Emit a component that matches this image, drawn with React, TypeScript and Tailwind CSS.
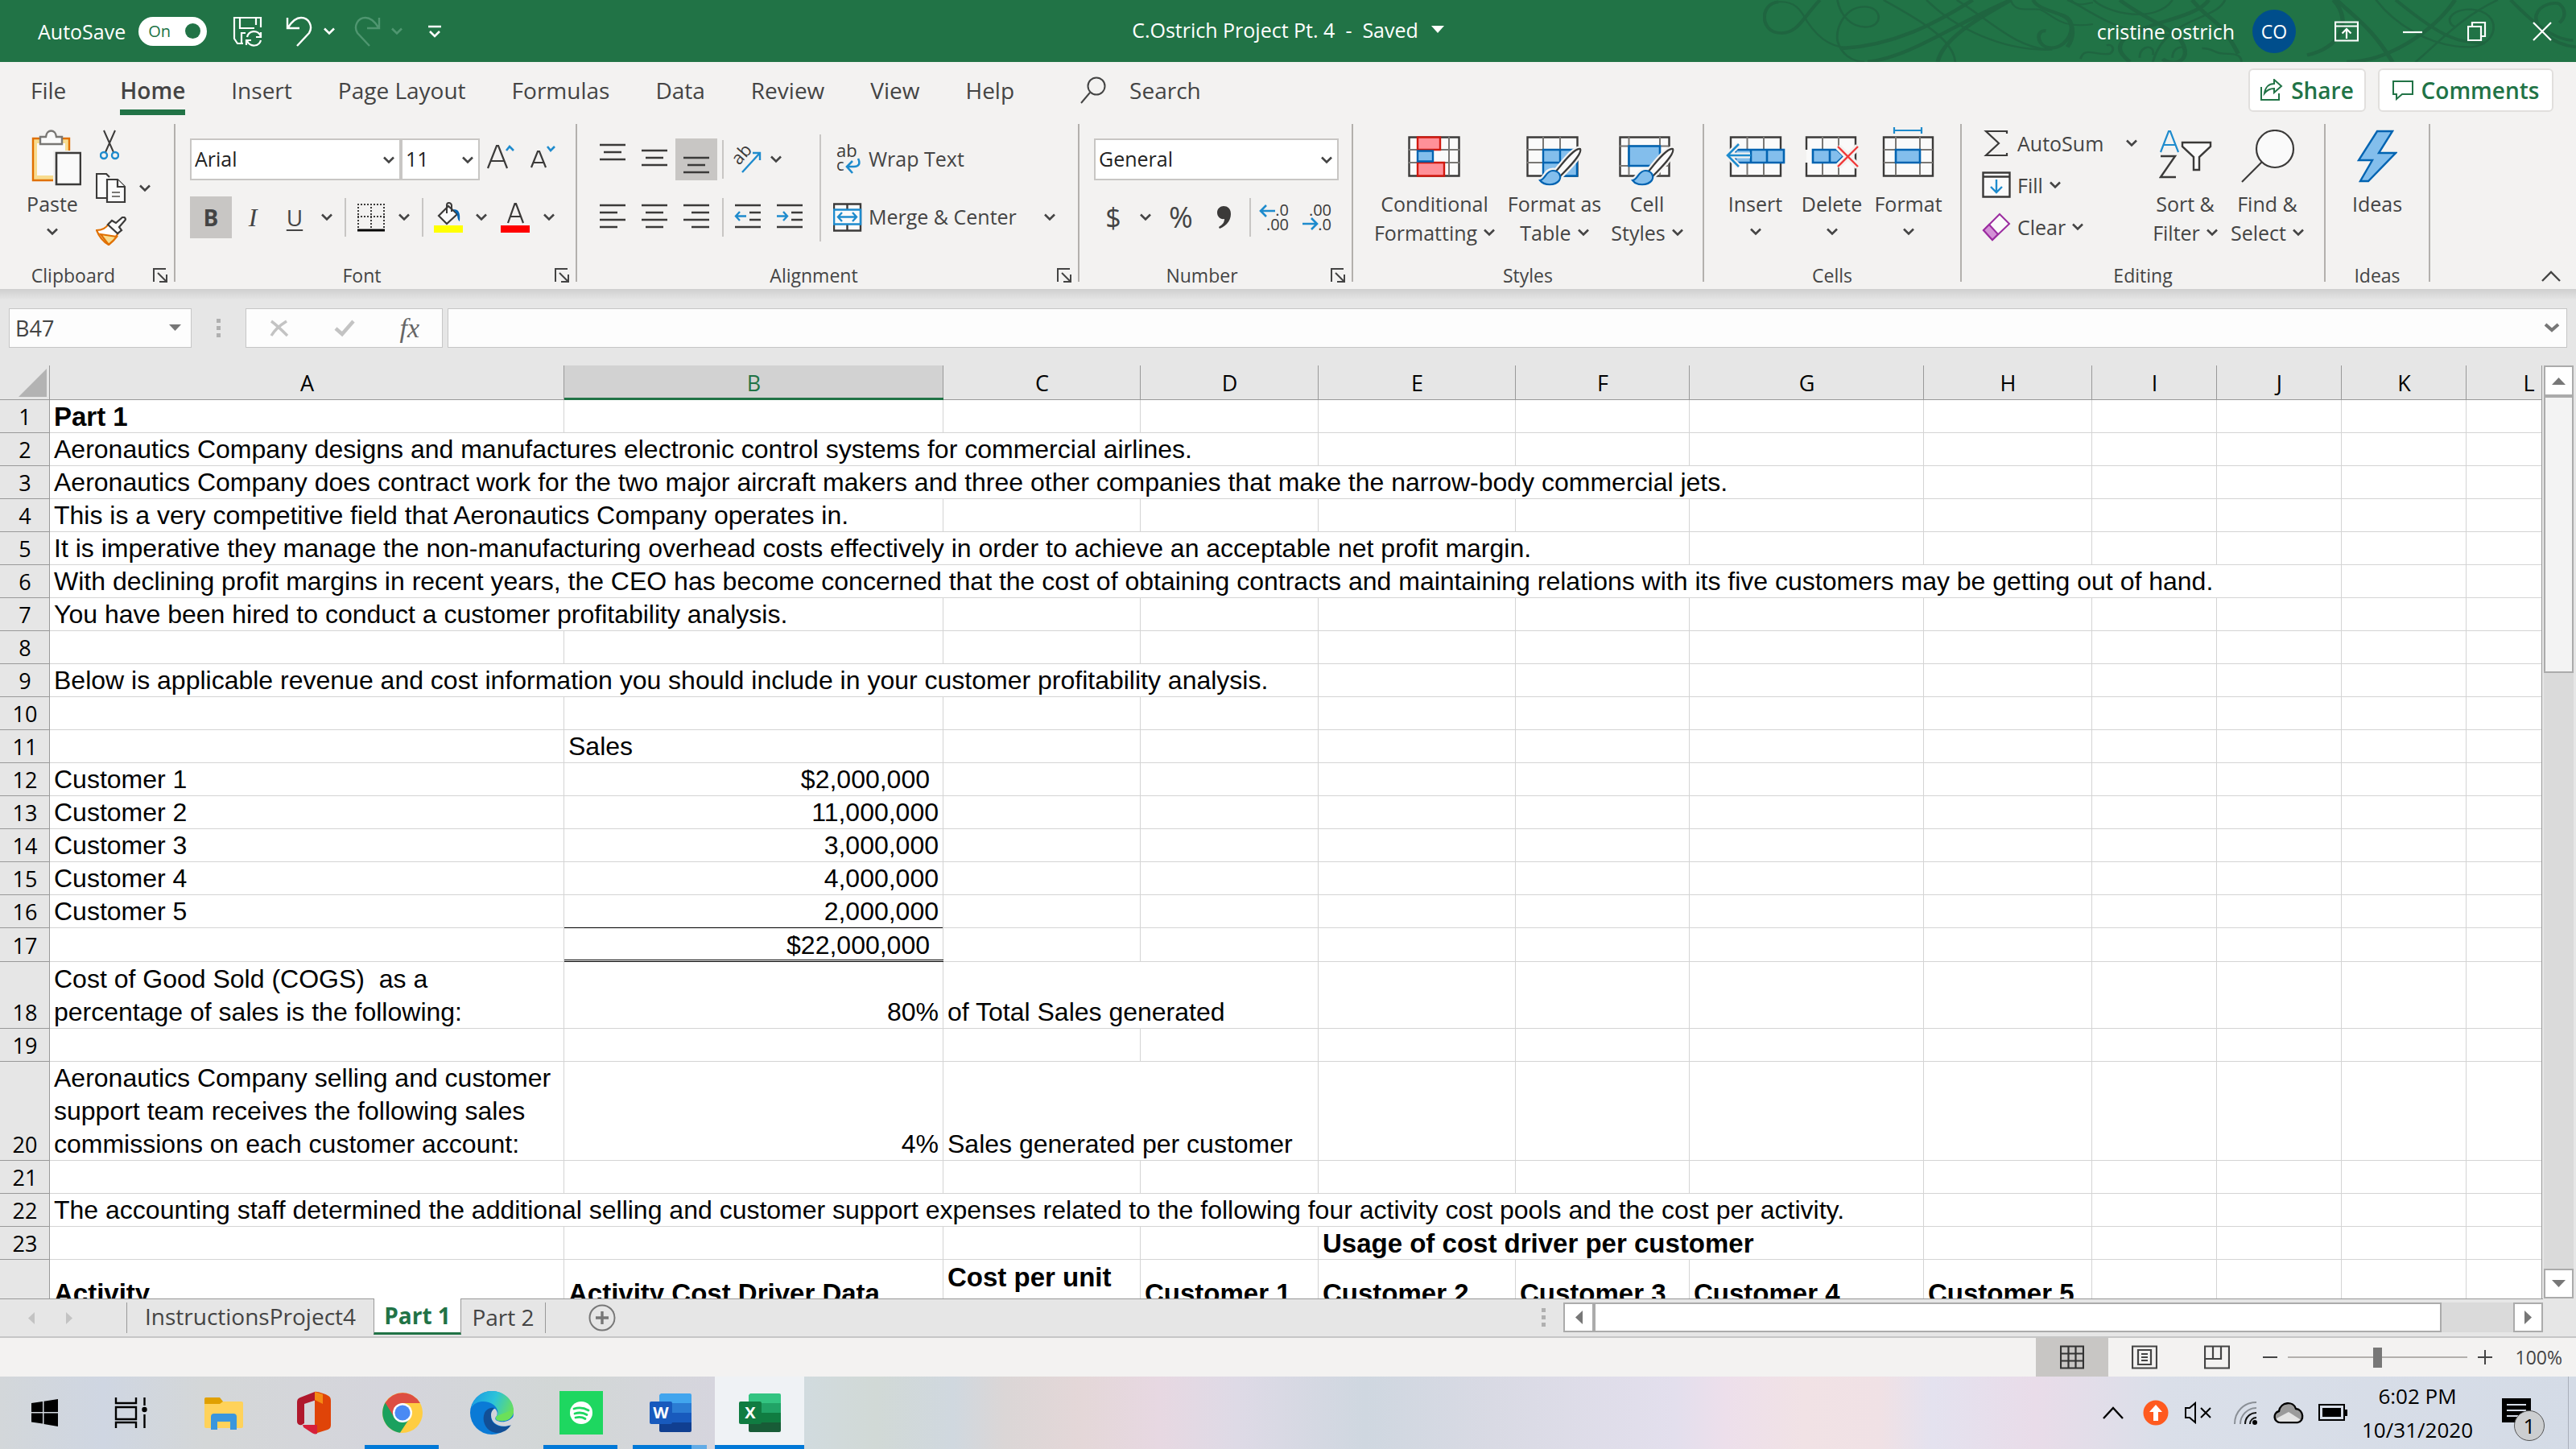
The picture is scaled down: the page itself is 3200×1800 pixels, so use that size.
import React, { useState } from 'react';

interface Cell {
  text: string;
  span?: number;
  align?: 'right' | 'accounting' | 'middle';
  bold?: boolean;
  line?: 'single' | 'double';
}

interface Row {
  height: string;
  cells: Record<string, Cell>;
}

const COLUMNS = ['A', 'B', 'C', 'D', 'E', 'F', 'G', 'H', 'I', 'J', 'K', 'L'];

const COLUMN_WIDTHS = [
  'w-[639px]', 'w-[471px]', 'w-[245px]', 'w-[221px]', 'w-[245px]', 'w-[216px]',
  'w-[291px]', 'w-[209px]', 'w-[155px]', 'w-[155px]', 'w-[155px]', 'w-[155px]',
];

const H1 = 'h-[41px]';

const ROWS: Row[] = [
  { height: H1, cells: { A: { text: 'Part 1', bold: true } } },
  { height: H1, cells: { A: { text: 'Aeronautics Company designs and manufactures electronic control systems for commercial airlines.', span: 4 } } },
  { height: H1, cells: { A: { text: 'Aeronautics Company does contract work for the two major aircraft makers and three other companies that make the narrow-body commercial jets.', span: 7 } } },
  { height: H1, cells: { A: { text: 'This is a very competitive field that Aeronautics Company operates in.', span: 2 } } },
  { height: H1, cells: { A: { text: 'It is imperative they manage the non-manufacturing overhead costs effectively in order to achieve an acceptable net profit margin.', span: 6 } } },
  { height: H1, cells: { A: { text: 'With declining profit margins in recent years, the CEO has become concerned that the cost of obtaining contracts and maintaining relations with its five customers may be getting out of hand.', span: 10 } } },
  { height: H1, cells: { A: { text: 'You have been hired to conduct a customer profitability analysis.', span: 2 } } },
  { height: H1, cells: {} },
  { height: H1, cells: { A: { text: 'Below is applicable revenue and cost information you should include in your customer profitability analysis.', span: 4 } } },
  { height: H1, cells: {} },
  { height: H1, cells: { B: { text: 'Sales' } } },
  { height: H1, cells: { A: { text: 'Customer 1' }, B: { text: '$2,000,000', align: 'accounting' } } },
  { height: H1, cells: { A: { text: 'Customer 2' }, B: { text: '11,000,000', align: 'right' } } },
  { height: H1, cells: { A: { text: 'Customer 3' }, B: { text: '3,000,000', align: 'right' } } },
  { height: H1, cells: { A: { text: 'Customer 4' }, B: { text: '4,000,000', align: 'right' } } },
  { height: H1, cells: { A: { text: 'Customer 5' }, B: { text: '2,000,000', align: 'right', line: 'single' } } },
  { height: 'h-[42px]', cells: { B: { text: '$22,000,000', align: 'accounting', line: 'double' } } },
  {
    height: 'h-[83px]',
    cells: {
      A: { text: 'Cost of Good Sold (COGS)  as a\npercentage of sales is the following:' },
      B: { text: '80%', align: 'right' },
      C: { text: 'of Total Sales generated', span: 2 },
    },
  },
  { height: H1, cells: {} },
  {
    height: 'h-[123px]',
    cells: {
      A: { text: 'Aeronautics Company selling and customer\nsupport team receives the following sales\ncommissions on each customer account:' },
      B: { text: '4%', align: 'right' },
      C: { text: 'Sales generated per customer', span: 2 },
    },
  },
  { height: H1, cells: {} },
  { height: H1, cells: { A: { text: 'The accounting staff determined the additional selling and customer support expenses related to the following four activity cost pools and the cost per activity.', span: 7 } } },
  { height: H1, cells: { E: { text: 'Usage of cost driver per customer', span: 3, bold: true } } },
  {
    height: 'h-[83px]',
    cells: {
      A: { text: 'Activity', bold: true, align: 'middle' },
      B: { text: 'Activity Cost Driver Data', bold: true, align: 'middle' },
      C: { text: 'Cost per unit\nof activity', bold: true, align: 'middle' },
      D: { text: 'Customer 1', bold: true, align: 'middle' },
      E: { text: 'Customer 2', bold: true, align: 'middle' },
      F: { text: 'Customer 3', bold: true, align: 'middle' },
      G: { text: 'Customer 4', bold: true, align: 'middle' },
      H: { text: 'Customer 5', bold: true, align: 'middle' },
    },
  },
];

const TABS = ['File', 'Home', 'Insert', 'Page Layout', 'Formulas', 'Data', 'Review', 'View', 'Help'];

/* ---------- small shared pieces ---------- */

const Chevron: React.FC<{ className?: string }> = ({ className = '' }) => (
  <svg className={`w-[14px] h-[10px] shrink-0 ${className}`} viewBox="0 0 14 10" fill="none" stroke="currentColor" strokeWidth="2.6">
    <path d="M1 1.5 7 7.5 13 1.5" />
  </svg>
);

const Sep: React.FC<{ className?: string }> = ({ className = '' }) => (
  <div className={`w-[2px] shrink-0 bg-[#c8c6c4] ${className}`} />
);

const Launcher: React.FC<{ label: string }> = ({ label }) => (
  <button aria-label={label} className="w-[34px] flex justify-center">
    <svg className="w-[18px] h-[18px]" viewBox="0 0 18 18" fill="none" stroke="#444" strokeWidth="2">
      <path d="M1 17V1h15M6 6l10 10M17 8v9H8" />
    </svg>
  </button>
);

interface GroupProps {
  label: string;
  width: string;
  launcher?: boolean;
  children: React.ReactNode;
}

const Group: React.FC<GroupProps> = ({ label, width, launcher, children }) => (
  <section className={`${width} shrink-0 h-[202px] flex`}>
    <div className="flex-1 min-w-0 flex flex-col">
      <div className="flex-1 flex min-h-0">{children}</div>
      <div className="h-[28px] flex items-center text-[23px] leading-[28px]">
        <span className="flex-1 text-center">{label}</span>
        {launcher && <Launcher label={`${label} settings`} />}
      </div>
    </div>
    <div className="w-[2px] h-[196px] bg-[#b3b0ad]" />
  </section>
);

interface BigButtonProps {
  lines: string[];
  width: string;
  arrow?: 'inline' | 'below';
  tall?: boolean;
  children: React.ReactNode;
}

const BigButton: React.FC<BigButtonProps> = ({ lines, width, arrow, tall, children }) => (
  <button className={`${width} flex flex-col items-center text-[25px] leading-[36px] whitespace-nowrap ${tall ? 'pt-[7px]' : 'pt-[15px]'}`}>
    <span className={`flex items-start ${tall ? 'h-[74px]' : 'h-[66px]'}`}>{children}</span>
    {lines.map((line, i) => (
      <span key={line} className="flex items-center gap-2">
        {line}
        {arrow === 'inline' && i === lines.length - 1 && <Chevron />}
      </span>
    ))}
    {arrow === 'below' && <Chevron className="mt-3" />}
  </button>
);

const IconButton: React.FC<{ label: string; active?: boolean; width?: string; children: React.ReactNode }> = ({ label, active, width = 'w-[52px]', children }) => (
  <button aria-label={label} className={`${width} h-[52px] shrink-0 flex items-center justify-center ${active ? 'bg-[#c8c6c4]' : ''}`}>
    {children}
  </button>
);

const ArrowButton: React.FC<{ label: string; width?: string }> = ({ label, width = 'w-[32px]' }) => (
  <button aria-label={label} className={`${width} h-[52px] shrink-0 flex items-center justify-center`}><Chevron /></button>
);

const Combo: React.FC<{ label: string; value: string; width: string }> = ({ label, value, width }) => (
  <div className={`${width} relative h-[52px] shrink-0`}>
    <select aria-label={label} className="w-full h-full appearance-none bg-white border-2 border-[#c8c6c4] pl-1 text-[25px] text-[#222]">
      <option>{value}</option>
    </select>
    <Chevron className="absolute right-[8px] top-[22px] pointer-events-none" />
  </div>
);

/* ---------- ribbon drawings ---------- */

const Lines: React.FC<{ d: string }> = ({ d }) => (
  <svg className="w-[36px] h-[52px]" viewBox="0 0 36 52" fill="none" stroke="#3b3a39" strokeWidth="2.4"><path d={d} /></svg>
);

const PasteIcon = () => (
  <svg className="ml-[10px] w-[62px] h-[70px]" viewBox="0 0 62 70" fill="none">
    <path d="M2 11h45v52H2z" fill="#f8dc8f" stroke="#e07000" strokeWidth="2.4" />
    <path d="M7 17h35v40H7z" fill="#fafafa" />
    <path d="M11 18V9h7c1-10 12-10 13 0h7v9z" fill="#fafafa" stroke="#797774" strokeWidth="2.4" />
    <path d="M27 26h35v44H27z" fill="#f3f2f1" />
    <path d="M31 29h30v39H31z" fill="#fafafa" stroke="#3b3a39" strokeWidth="2.6" />
  </svg>
);

const CutIcon = () => (
  <svg className="w-[24px] h-[38px]" viewBox="0 0 24 38" fill="none">
    <path d="M5 1l12 27M19 1 7 28" stroke="#3b3a39" strokeWidth="2" />
    <circle cx="5" cy="32" r="4" stroke="#1e8bcd" strokeWidth="2.4" />
    <circle cx="19" cy="32" r="4" stroke="#1e8bcd" strokeWidth="2.4" />
  </svg>
);

const CopyIcon = () => (
  <svg className="w-[38px] h-[38px]" viewBox="0 0 38 38" fill="#fafafa" stroke="#3b3a39" strokeWidth="2.2">
    <path d="M15 31H1V1h12l4 4" />
    <path d="M14 8h13l9 9v19H14z" />
    <path d="M27 8v9h9" />
    <path d="M20 24h10M20 29h10" stroke="#797774" />
  </svg>
);

const BrushIcon = () => (
  <svg className="w-[38px] h-[36px]" viewBox="0 0 38 36" strokeWidth="2.2">
    <path d="M1 17c7 0 12-3 15-8l12 11c-3 6-7 10-12 15C9 31 4 25 1 17z" fill="#fff" stroke="#e07000" />
    <path d="M6 22l20 3c-3 4-6 7-10 10z" fill="#f8dc8f" stroke="#e07000" />
    <path d="M15 10l5-5 5 3 8-7c3-1 5 2 3 4l-7 8 3 4-5 4z" fill="#fafafa" stroke="#3b3a39" />
  </svg>
);

const GrowFont: React.FC<{ small?: boolean }> = ({ small }) => (
  <svg className="w-[36px] h-[36px]" viewBox="0 0 36 36" fill="none">
    {small
      ? <path d="M4 28 12 8h2l8 20M7 22h12" stroke="#3b3a39" strokeWidth="2.2" />
      : <path d="M2 29 13 1h2l11 28M6 20h16" stroke="#3b3a39" strokeWidth="2.2" />}
    {small
      ? <path d="M24 2l4 5 5-5" stroke="#1e8bcd" strokeWidth="2.6" />
      : <path d="M25 7l4-5 5 5" stroke="#1e8bcd" strokeWidth="2.6" />}
  </svg>
);

const BordersIcon = () => (
  <svg className="w-[36px] h-[36px]" viewBox="0 0 36 36" fill="none" stroke="#3b3a39">
    <path d="M2 1v30M18 1v30M34 1v30M1 2h34M1 17h34" strokeWidth="2" strokeDasharray="2 2" />
    <path d="M1 34h34" stroke="#000" strokeWidth="3" />
  </svg>
);

const FillColorIcon = () => (
  <svg className="w-[36px] h-[38px]" viewBox="0 0 36 38" fill="none">
    <path d="M6 17 18 5l11 10-13 12z" fill="#fafafa" stroke="#3b3a39" strokeWidth="2.2" />
    <path d="M16 14V4c0-4 5-4 6 0v8" stroke="#3b3a39" strokeWidth="2" />
    <path d="M24 9c7 0 9 4 8 15-2-1-3-5-3-9z" fill="#0063b1" />
    <path d="M0 29h36v9H0z" fill="#ff0" />
  </svg>
);

const FontColorIcon = () => (
  <svg className="w-[36px] h-[38px]" viewBox="0 0 36 38" fill="none">
    <path d="M9 26 17.500 2h1.500l9 24M12 18h13" stroke="#3b3a39" strokeWidth="2.2" />
    <path d="M0 29h36v9H0z" fill="red" />
  </svg>
);

const OrientIcon = () => (
  <svg className="w-[38px] h-[38px]" viewBox="0 0 38 38" fill="none">
    <text x="0" y="0" transform="translate(9 27) rotate(-48)" fontSize="22" fill="#3b3a39" className="font-['Open_Sans',sans-serif]">ab</text>
    <path d="M13 35 35 11M26 11h9v9" stroke="#1e8bcd" strokeWidth="2.4" />
  </svg>
);

const WrapIcon = () => (
  <svg className="w-[36px] h-[38px]" viewBox="0 0 36 38" fill="none">
    <text x="4" y="16" fontSize="22" fill="#3b3a39" className="font-['Open_Sans',sans-serif]">ab</text>
    <text x="4" y="33" fontSize="20" fill="#3b3a39" className="font-['Open_Sans',sans-serif]">c</text>
    <path d="M31 18c3 6 1 10-5 10h-8M24 21l-7 7 7 8" stroke="#1e8bcd" strokeWidth="2.6" />
  </svg>
);

const MergeIcon = () => (
  <svg className="w-[36px] h-[36px]" viewBox="0 0 36 36" fill="#fafafa">
    <path d="M1 1.500h33v33H1zM17.500 1v33" stroke="#3b3a39" strokeWidth="2.4" />
    <path d="M1 8.500h33v18H1z" stroke="#1e8bcd" strokeWidth="2.6" />
    <path d="M6 17.500h23M11 12l-5 5.500 5 5.500M24 12l5 5.500-5 5.500" fill="none" stroke="#1e8bcd" strokeWidth="2.4" />
  </svg>
);

const DecimalIcon: React.FC<{ more?: boolean }> = ({ more }) => (
  <svg className="w-[38px] h-[38px]" viewBox="0 0 38 38" fill="none">
    <text x="37" y="17" textAnchor="end" fontSize="20" fill="#3b3a39" className="font-['Open_Sans',sans-serif]">{more ? '.0' : '.00'}</text>
    <text x="37" y="35" textAnchor="end" fontSize="20" fill="#3b3a39" className="font-['Open_Sans',sans-serif]">{more ? '.00' : '.0'}</text>
    {more
      ? <path d="M2 11h18M9 4l-7 7 7 7" stroke="#1e8bcd" strokeWidth="2.6" />
      : <path d="M1 27h18M12 20l7 7-7 7" stroke="#1e8bcd" strokeWidth="2.6" />}
  </svg>
);

const CondIcon = () => (
  <svg className="w-[66px] h-[52px]" viewBox="0 0 66 52" fill="#fafafa">
    <path d="M1.500 1.500h62v48h-62z" stroke="#3b3a39" strokeWidth="2.4" />
    <path d="M1 17h63M1 33h63M51 1v48M12 1v48" stroke="#797774" strokeWidth="2" />
    <path d="M12 1.500h28V17H12zM12 33h33v16.500H12z" fill="#ff9098" stroke="#d1190f" strokeWidth="2.4" />
    <path d="M12 18.500h19v13H12z" fill="#83beec" stroke="#0063b1" strokeWidth="2.4" />
  </svg>
);

const PaintBrush = () => (
  <>
    <path d="M67 16C60 14 45 34 36 45l6 5C52 40 70 22 67 16zM17 55c7-1 7-12 16-12 8 0 11 7 8 12-5 7-19 7-24 0z" fill="#f3f2f1" stroke="#f3f2f1" strokeWidth="7" />
    <path d="M67 16C60 14 45 34 36 45l6 5C52 40 70 22 67 16z" fill="#fafafa" stroke="#3b3a39" strokeWidth="2.2" />
    <path d="M17 55c7-1 7-12 16-12 8 0 11 7 8 12-5 7-19 7-24 0z" fill="#83beec" stroke="#0063b1" strokeWidth="2.2" />
  </>
);

const TableStyleIcon = () => (
  <svg className="w-[70px] h-[62px]" viewBox="0 0 70 62" fill="#fafafa">
    <path d="M1.500 1.500h62v48h-62z" stroke="#3b3a39" strokeWidth="2.4" />
    <path d="M1 17h62M1 33h62M21 1v48M42 1v48" stroke="#797774" strokeWidth="2" />
    <path d="M21 17h42v32.500H21zM21 33h42M42 17v32" fill="#83beec" stroke="#0063b1" strokeWidth="2.4" />
    <PaintBrush />
  </svg>
);

const CellStyleIcon = () => (
  <svg className="w-[70px] h-[62px]" viewBox="0 0 70 62" fill="#fafafa">
    <path d="M1.500 1.500h61v48h-61z" stroke="#3b3a39" strokeWidth="2.4" />
    <path d="M1 12.500h61M1 37h61M12.500 1v48M51 1v48" stroke="#797774" strokeWidth="2" />
    <path d="M12.500 12.500H51V37H12.500z" fill="#83beec" stroke="#0063b1" strokeWidth="2.6" />
    <PaintBrush />
  </svg>
);

const InsertIcon = () => (
  <svg className="w-[74px] h-[52px]" viewBox="0 0 74 52" fill="#fafafa">
    <path d="M6 1.500h62v48H6z" stroke="#3b3a39" strokeWidth="2.4" />
    <path d="M26.500 1v48M47 1v48" stroke="#797774" strokeWidth="2" />
    <path d="M12 17h60v16H12zM31 17v16M51 17v16" fill="#83beec" stroke="#0063b1" strokeWidth="2.6" />
    <path d="M30 24H2M16 10 2 24l14 14" fill="none" stroke="#f3f2f1" strokeWidth="7" />
    <path d="M31 24H2M16 10 2 24l14 14" fill="none" stroke="#1e8bcd" strokeWidth="2.6" />
  </svg>
);

const DeleteIcon = () => (
  <svg className="w-[68px] h-[52px]" viewBox="0 0 68 52" fill="#fafafa">
    <path d="M2 17V1.500h61v48H2V33" stroke="#3b3a39" strokeWidth="2.4" />
    <path d="M22 1v16M42 1v16M22 33v16M42 33v16" stroke="#797774" strokeWidth="2" />
    <path d="M10 17h30l8 8-8 8H10zM31 17v16" fill="#83beec" stroke="#0063b1" strokeWidth="2.6" />
    <path d="M41 13l25 25M66 13 41 38" stroke="#f3f2f1" strokeWidth="8" />
    <path d="M41 13l25 25M66 13 41 38" stroke="#f03a3a" strokeWidth="2.4" />
  </svg>
);

const FormatIcon = () => (
  <svg className="w-[66px] h-[64px] -mt-3" viewBox="0 0 66 64" fill="#fafafa">
    <path d="M2 13.500h61v48H2z" stroke="#3b3a39" strokeWidth="2.4" />
    <path d="M2 29h61M2 45h61M17 13v48M47 13v48" stroke="#797774" strokeWidth="2" />
    <path d="M17 29h30v16H17z" fill="#83beec" stroke="#0063b1" strokeWidth="2.6" />
    <path d="M15 5h34M15 1v8M49 1v8" stroke="#1e8bcd" strokeWidth="2.2" />
  </svg>
);

const SumIcon = () => (
  <svg className="w-[36px] h-[34px]" viewBox="0 0 36 34" fill="none" stroke="#3b3a39" strokeWidth="2.2">
    <path d="M31 5V2H5l16 15L5 32h26v-3" />
  </svg>
);

const FillIcon = () => (
  <svg className="w-[36px] h-[34px]" viewBox="0 0 36 34" fill="#fafafa" stroke="#3b3a39" strokeWidth="2.4">
    <path d="M1.500 1.500h33v30h-33zM1 6.500h34" />
    <path d="M18 10v16M11 19l7 7 7-7" fill="none" stroke="#1e8bcd" />
  </svg>
);

const ClearIcon = () => (
  <svg className="w-[36px] h-[36px]" viewBox="0 0 36 36" fill="#fafafa" stroke="#9b2ca0" strokeWidth="2">
    <path d="M22 2 34 14 13 34 2 22z" />
    <path d="M9 15 20 27 13 34 2 22z" fill="#d390d6" />
  </svg>
);

const SortIcon = () => (
  <svg className="w-[66px] h-[62px]" viewBox="0 0 66 62" fill="none">
    <path d="M2 28 12 2h2l10 26M6 19h14" stroke="#1e8bcd" strokeWidth="2.2" />
    <path d="M2 33h18L2 59h19" stroke="#3b3a39" strokeWidth="2.4" />
    <path d="M29 16h35v5L50 34v16h-7V34L29 21z" fill="#fafafa" stroke="#3b3a39" strokeWidth="2.4" />
  </svg>
);

const FindIcon = () => (
  <svg className="w-[68px] h-[66px]" viewBox="0 0 68 66" fill="#fafafa" stroke="#3b3a39" strokeWidth="2.2">
    <circle cx="43" cy="24" r="23" />
    <path d="M27 40 2 65" />
  </svg>
);

const BoltIcon = () => (
  <svg className="w-[50px] h-[66px]" viewBox="0 0 50 66" fill="#83beec" stroke="#0063b1" strokeWidth="2.4">
    <path d="M25 2h19L27 29h21L14 64H4l15-26H2z" />
  </svg>
);

/* ---------- title bar ---------- */

const Swirls = () => (
  <svg className="absolute right-0 top-0 w-[1010px] h-[77px] pointer-events-none" viewBox="0 0 1010 77" fill="none" stroke="#1f6540">
    <g transform="translate(-210 0) scale(.3954 .3333)">
      <path strokeWidth="11" d="M710 0C660 60 640 128 585 123 520 120 520 12 580 7" />
      <path strokeWidth="6" d="M580 7c60-5 75 45 90 73 40 70 80 100 150 100" />
      <path strokeWidth="13" d="M780 180c160-10 290-90 410-180M860 231c140-21 270-141 450-231M1080 231c20-101 160-181 230-231" />
      <path strokeWidth="7" d="M765 0c10 60 45 105 95 100 50-5 45-75-10-75-60 0-90 75-85 125 10 50 45 80 85 81M910 0c90 60 220 140 225 231M1045 0c85 100 235 190 390 185M1140 0c110 80 190 185 300 185" />
      <path strokeWidth="12" d="M1420 115c-30-5-30 45 0 60 40 15 80-25 80-75 0-60-100-50-120-100" />
      <path strokeWidth="6" d="M1310 0c10 50 60 30 90 35 40 15 60 75 168 55M1500 0c20 30 50 10 68 10" />
    </g>
    <g transform="translate(370 0) scale(.408 .3333)">
      <path strokeWidth="13" d="M0 55c40 10 45 80 20 120M180 0c60 60 170 110 190 160 30 70-30 90-60 60M450 0c-40 80-270 90-270 180 0 20 20 40 30 51M400 0c60 90 80 60 140 200M830 0c60 80 20 180-80 205M840 0c70 80 110 110 170 231M1200 0c-60 110-200 231-330 231" />
      <path strokeWidth="7" d="M20 0c80 40 150 140 340 130M60 220c10-50 50-10 90-20 20-20 0-40-10-30M340 0c-50 90-200 50-240 0M500 0c-30 80-180 60-220 231M240 215c0-50 50-50 40-10M340 215c0-50 50-50 40-10M430 180c40 0 30 20 70 20 40 0 50 10 50 31M960 0c50 80 160 180 290 175 80-5 100-130 0-140-70 0-80 50-50 65M1080 231c60-60 140-170 250-231" />
      <path strokeWidth="11" d="M1020 0c130 130 180 160 270 160M1370 0c40 50 120 150 190 150M1568 175c-80-10-130-80-120-120 10-40 60-50 70-40 20 20 20 50 0 70" />
    </g>
  </svg>
);

const TitleBar: React.FC = () => {
  const [autoSave, setAutoSave] = useState(true);
  return (
    <header className="relative h-[77px] shrink-0 bg-[#217346] text-white grid grid-cols-[1fr_auto_1fr] items-center text-[25px] leading-[34px]">
      <Swirls />
      <div className="flex items-center pl-[47px]">
        <span>AutoSave</span>
        <button
          role="switch"
          aria-checked={autoSave}
          onClick={() => setAutoSave(!autoSave)}
          className="ml-[16px] w-[85px] h-[36px] rounded-full bg-white text-[#217346] text-[20px] flex items-center justify-between pl-3 pr-2"
        >
          {autoSave ? 'On' : 'Off'}
          <span className="size-[19px] rounded-full bg-[#217346]" />
        </button>
        <button aria-label="Save" className="ml-[32px]">
          <svg className="w-[38px] h-[38px]" viewBox="0 0 38 38" fill="none" stroke="#fff" strokeWidth="2.2">
            <path d="M35 14V2H2v26l4 6h7M9 2v13h18M29 2v9M11 33V21h5" />
            <path d="M35 20v6h-6M17 36v-6h6M18 26c2-8 13-10 17-1M35 30c-2 8-13 9-17 1" />
          </svg>
        </button>
        <button aria-label="Undo" className="ml-[28px] flex items-center">
          <svg className="w-[34px] h-[38px]" viewBox="0 0 34 38" fill="none" stroke="#fff" strokeWidth="2.4">
            <path d="M2 2v13h15M3 14C8 6 13 2 19 2c10 0 15 11 10 19L14 37" />
          </svg>
          <Chevron className="ml-[13px]" />
        </button>
        <button aria-label="Redo" className="ml-[23px] flex items-center text-[#4f9670]">
          <svg className="w-[34px] h-[38px]" viewBox="0 0 34 38" fill="none" stroke="currentColor" strokeWidth="2.4">
            <path d="M32 2v13H17M31 14C26 6 21 2 15 2 5 2 0 13 5 21l15 16" />
          </svg>
          <Chevron className="ml-[13px]" />
        </button>
        <button aria-label="Customize toolbar" className="ml-[31px]">
          <svg className="w-[18px] h-[16px]" viewBox="0 0 18 16" fill="none" stroke="#fff" strokeWidth="2.6">
            <path d="M1 2h16M3 8l6 6 6-6" />
          </svg>
        </button>
      </div>
      <div className="flex items-center pb-1 whitespace-pre">
        C.Ostrich Project Pt. 4  -  Saved
        <svg className="ml-4 w-[16px] h-[9px]" viewBox="0 0 16 9" fill="#fff"><path d="M0 0h16L8 9z" /></svg>
      </div>
      <div className="relative flex items-center justify-end pr-[30px]">
        <span>cristine ostrich</span>
        <button aria-label="Account" className="ml-[22px] size-[54px] rounded-full bg-[#004e8c] text-[23px]">CO</button>
        <button aria-label="Ribbon display options" className="ml-[48px]">
          <svg className="w-[30px] h-[26px]" viewBox="0 0 30 26" fill="none" stroke="#fff" strokeWidth="2.2">
            <path d="M1 1.500h28v23H1zM1 6.500h28M15 22V10M9.500 15.500 15 10l5.500 5.500" />
          </svg>
        </button>
        <button aria-label="Minimize" className="ml-[55px]">
          <svg className="w-[24px] h-[24px]" viewBox="0 0 24 24" stroke="#fff" strokeWidth="2.2"><path d="M0 13h24" /></svg>
        </button>
        <button aria-label="Restore" className="ml-[56px]">
          <svg className="w-[24px] h-[26px]" viewBox="0 0 24 26" fill="none" stroke="#fff" strokeWidth="2.2">
            <path d="M1 7h16v17H1zM6 7V2h16v17h-5" />
          </svg>
        </button>
        <button aria-label="Close" className="ml-[57px]">
          <svg className="w-[24px] h-[24px]" viewBox="0 0 24 24" stroke="#fff" strokeWidth="2.2"><path d="M1 1l22 22M23 1 1 23" /></svg>
        </button>
      </div>
    </header>
  );
};

/* ---------- ribbon ---------- */

const Ribbon: React.FC = () => (
  <div className="h-[282px] shrink-0 bg-[#f3f2f1] text-[#444]">
    <div className="h-[77px] flex items-center pl-[38px] pr-[28px] pb-[8px]">
      <nav className="flex gap-[57px] text-[28px] leading-[44px] pr-[82px]">
        {TABS.map(tab => (
          <a
            key={tab}
            href="#"
            className={tab === 'Home' ? 'relative font-semibold after:absolute after:inset-x-0 after:bottom-[-9px] after:h-[7px] after:bg-[#217346]' : tab === 'File' ? 'pr-[10px]' : ''}
          >
            {tab}
          </a>
        ))}
      </nav>
      <div className="flex items-center gap-[29px] flex-1">
        <svg className="w-[32px] h-[34px]" viewBox="0 0 32 34" fill="none" stroke="#444" strokeWidth="2">
          <circle cx="20" cy="12" r="10.500" />
          <path d="M12 20 1 33" />
        </svg>
        <input type="search" aria-label="Search" placeholder="Search" className="w-[300px] h-[44px] bg-transparent text-[28px] outline-none placeholder:text-[#444]" />
      </div>
      <button className="h-[54px] w-[146px] rounded-md border-2 border-[#e1dfdd] bg-white text-[#217346] text-[28px] font-semibold flex items-center justify-center gap-[10px]">
        <svg className="w-[28px] h-[28px]" viewBox="0 0 28 28" fill="none" stroke="currentColor" strokeWidth="2">
          <path d="M1 10v16h22v-8M5 18C6 10 11 6 17 6V1l9 8-9 8v-5c-5 0-9 2-12 6z" />
        </svg>
        Share
      </button>
      <button className="ml-[15px] h-[54px] w-[218px] rounded-md border-2 border-[#e1dfdd] bg-white text-[#217346] text-[28px] font-semibold flex items-center justify-center gap-[10px]">
        <svg className="w-[26px] h-[26px]" viewBox="0 0 26 26" fill="none" stroke="currentColor" strokeWidth="2">
          <path d="M1 2h24v16H12l-7 6v-6H1z" />
        </svg>
        Comments
      </button>
    </div>

    <div className="flex">
      <Group label="Clipboard" width="w-[218px]" launcher>
        <BigButton lines={['Paste']} width="w-[94px] pl-[36px]" arrow="below" tall><PasteIcon /></BigButton>
        <div className="flex flex-col pt-[7px] pl-[25px] gap-[16px]">
          <button aria-label="Cut" className="w-[34px] flex justify-center"><CutIcon /></button>
          <button aria-label="Copy" className="flex items-center gap-[16px]"><CopyIcon /><Chevron /></button>
          <button aria-label="Format painter" className="w-[38px]"><BrushIcon /></button>
        </div>
      </Group>

      <Group label="Font" width="w-[499px]" launcher>
        <div className="flex flex-col gap-[20px] pt-[18px] pl-[18px]">
          <div className="flex">
            <Combo label="Font name" value="Arial" width="w-[262px]" />
            <Combo label="Font size" value="11" width="w-[98px]" />
            <IconButton label="Increase font size"><GrowFont /></IconButton>
            <IconButton label="Decrease font size"><GrowFont small /></IconButton>
          </div>
          <div className="flex items-center text-[28px]">
            <IconButton label="Bold" active><b>B</b></IconButton>
            <IconButton label="Italic"><i className="font-['Liberation_Serif',serif] text-[32px]">I</i></IconButton>
            <IconButton label="Underline"><span className="underline underline-offset-4">U</span></IconButton>
            <ArrowButton label="Underline style" width="w-[28px]" />
            <Sep className="h-[48px] ml-[8px]" />
            <IconButton label="Borders" width="w-[62px]"><BordersIcon /></IconButton>
            <ArrowButton label="Border style" width="w-[20px]" />
            <Sep className="h-[48px] ml-[12px]" />
            <IconButton label="Fill color" width="w-[62px]"><FillColorIcon /></IconButton>
            <ArrowButton label="Fill palette" width="w-[20px]" />
            <IconButton label="Font color" width="w-[64px]"><FontColorIcon /></IconButton>
            <ArrowButton label="Font palette" width="w-[20px]" />
          </div>
        </div>
      </Group>

      <Group label="Alignment" width="w-[624px]" launcher>
        <div className="flex flex-col gap-[20px] pt-[18px] pl-[18px] w-[301px]">
          <div className="flex items-center">
            <IconButton label="Top align"><Lines d="M2 8h32M7 17h22M2 26h32" /></IconButton>
            <IconButton label="Middle align"><Lines d="M2 15h32M7 24h22M2 33h32" /></IconButton>
            <IconButton label="Bottom align" active><Lines d="M2 24h32M7 33h22M2 42h32" /></IconButton>
            <Sep className="h-[48px] ml-[6px]" />
            <IconButton label="Orientation" width="w-[58px]"><OrientIcon /></IconButton>
            <ArrowButton label="Orientation options" width="w-[14px]" />
          </div>
          <div className="flex items-center">
            <IconButton label="Align left"><Lines d="M2 11h32M2 20h22M2 29h32M2 38h22" /></IconButton>
            <IconButton label="Center"><Lines d="M2 11h32M7 20h22M2 29h32M7 38h22" /></IconButton>
            <IconButton label="Align right"><Lines d="M2 11h32M12 20h22M2 29h32M12 38h22" /></IconButton>
            <Sep className="h-[48px] ml-[6px]" />
            <IconButton label="Decrease indent" width="w-[60px]">
              <svg className="w-[36px] h-[52px]" viewBox="0 0 36 52" fill="none" strokeWidth="2.4">
                <path d="M2 11h32M20 20h14M20 29h14M2 38h32" stroke="#3b3a39" />
                <path d="M16 24.500H3M8 19l-5 5.500L8 30" stroke="#1e8bcd" />
              </svg>
            </IconButton>
            <IconButton label="Increase indent" width="w-[44px]">
              <svg className="w-[36px] h-[52px]" viewBox="0 0 36 52" fill="none" strokeWidth="2.4">
                <path d="M2 11h32M20 20h14M20 29h14M2 38h32" stroke="#3b3a39" />
                <path d="M2 24.500h13M10 19l5 5.500-5 5.500" stroke="#1e8bcd" />
              </svg>
            </IconButton>
          </div>
        </div>
        <Sep className="h-[133px] mt-[13px]" />
        <div className="flex flex-col gap-[20px] pt-[18px] pl-[15px] text-[25px]">
          <button className="h-[52px] flex items-center gap-[8px]"><WrapIcon />Wrap Text</button>
          <button className="h-[52px] flex items-center gap-[8px]"><MergeIcon />Merge &amp; Center<Chevron className="ml-[26px]" /></button>
        </div>
      </Group>

      <Group label="Number" width="w-[340px]" launcher>
        <div className="flex flex-col gap-[20px] pt-[18px] pl-[18px]">
          <Combo label="Number format" value="General" width="w-[304px]" />
          <div className="flex items-center">
            <IconButton label="Accounting format" width="w-[48px]"><span className="text-[34px]">$</span></IconButton>
            <ArrowButton label="Currency" />
            <IconButton label="Percent" width="w-[56px]"><span className="text-[36px]">%</span></IconButton>
            <IconButton label="Comma">
              <svg className="w-[18px] h-[30px]" viewBox="0 0 18 30" fill="#3b3a39"><path d="M8 1c6 0 9 4 9 10 0 8-6 15-14 18l-1-2c5-3 7-6 7-10C4 18 0 14 0 9c0-5 4-8 8-8z" /></svg>
            </IconButton>
            <Sep className="h-[48px] ml-[5px]" />
            <IconButton label="Increase decimal" width="w-[58px]"><DecimalIcon more /></IconButton>
            <IconButton label="Decrease decimal" width="w-[48px]"><DecimalIcon /></IconButton>
          </div>
        </div>
      </Group>

      <Group label="Styles" width="w-[436px]">
        <div className="flex pl-[18px]">
          <BigButton lines={['Conditional', 'Formatting']} width="w-[166px]" arrow="inline"><CondIcon /></BigButton>
          <BigButton lines={['Format as', 'Table']} width="w-[132px]" arrow="inline"><TableStyleIcon /></BigButton>
          <BigButton lines={['Cell', 'Styles']} width="w-[98px]" arrow="inline"><CellStyleIcon /></BigButton>
        </div>
      </Group>

      <Group label="Cells" width="w-[320px]">
        <div className="flex pl-[16px]">
          <BigButton lines={['Insert']} width="w-[95px]" arrow="below"><InsertIcon /></BigButton>
          <BigButton lines={['Delete']} width="w-[95px]" arrow="below"><DeleteIcon /></BigButton>
          <BigButton lines={['Format']} width="w-[95px]" arrow="below"><FormatIcon /></BigButton>
        </div>
      </Group>

      <Group label="Editing" width="w-[452px]">
        <div className="flex flex-col gap-[16px] pt-[6px] pl-[25px] w-[227px] text-[25px] leading-[36px]">
          <button className="flex items-center gap-[8px]"><SumIcon />AutoSum<Chevron className="ml-[20px]" /></button>
          <button className="flex items-center gap-[8px]"><FillIcon />Fill<Chevron /></button>
          <button className="flex items-center gap-[8px]"><ClearIcon />Clear<Chevron /></button>
        </div>
        <div className="flex">
          <BigButton lines={['Sort &', 'Filter']} width="w-[101px]" arrow="inline" tall><SortIcon /></BigButton>
          <BigButton lines={['Find &', 'Select']} width="w-[103px]" arrow="inline" tall><FindIcon /></BigButton>
        </div>
      </Group>

      <Group label="Ideas" width="w-[130px]">
        <BigButton lines={['Ideas']} width="w-[128px]" tall><BoltIcon /></BigButton>
      </Group>

      <div className="flex-1 flex items-end justify-end pr-[18px] pb-[6px]">
        <button aria-label="Collapse the ribbon">
          <svg className="w-[26px] h-[14px]" viewBox="0 0 26 14" fill="none" stroke="#444" strokeWidth="2.4"><path d="M2 13 13 2l11 11" /></svg>
        </button>
      </div>
    </div>
  </div>
);

/* ---------- formula bar ---------- */

const Dots: React.FC = () => (
  <div className="flex flex-col gap-[4px]">
    <i className="size-[5px] bg-[#b0b0b0]" />
    <i className="size-[5px] bg-[#b0b0b0]" />
    <i className="size-[5px] bg-[#b0b0b0]" />
  </div>
);

const FormulaBar: React.FC = () => (
  <div className="h-[95px] shrink-0 flex items-start pt-[24px] pl-[11px] pr-[11px] bg-[linear-gradient(to_bottom,#cfcfcf,#e6e6e6_14px)]">
    <div className="relative w-[227px] h-[49px]">
      <input aria-label="Name box" defaultValue="B47" className="w-full h-full bg-[#fdfdfd] border border-[#c6c6c6] pl-[7px] text-[27px] text-[#444]" />
      <svg className="absolute right-[13px] top-[20px] w-[15px] h-[8px]" viewBox="0 0 15 8" fill="#777"><path d="M0 0h15L7.500 8z" /></svg>
    </div>
    <div className="w-[67px] h-[49px] flex items-center justify-center"><Dots /></div>
    <div className="w-[245px] h-[49px] bg-[#fdfdfd] border border-[#c6c6c6] flex items-center justify-between px-[28px]">
      <button aria-label="Cancel">
        <svg className="w-[26px] h-[24px]" viewBox="0 0 26 24" fill="none" stroke="#c3c3c3" strokeWidth="3.400"><path d="M3 3c7 5 14 12 20 18M22 3C14 8 7 14 3 21" /></svg>
      </button>
      <button aria-label="Enter">
        <svg className="w-[26px] h-[24px]" viewBox="0 0 26 24" fill="none" stroke="#c3c3c3" strokeWidth="4.500"><path d="M2 12l8 7L24 3" /></svg>
      </button>
      <button aria-label="Insert function" className="font-['Liberation_Serif',serif] italic text-[34px] leading-[40px] text-[#666]">fx</button>
    </div>
    <div className="relative ml-[6px] flex-1 h-[49px]">
      <input aria-label="Formula" className="w-full h-full bg-[#fdfdfd] border border-[#c6c6c6] px-2 text-[27px]" />
      <svg className="absolute right-[9px] top-[18px] w-[20px] h-[13px]" viewBox="0 0 20 13" fill="none" stroke="#777" strokeWidth="4"><path d="M2 2l8 7 8-7" /></svg>
    </div>
  </div>
);

/* ---------- sheet ---------- */

const ALIGN = {
  right: 'text-right pr-[6px] align-bottom',
  accounting: 'text-right pr-[17px] align-bottom',
  middle: 'text-left pl-[5px] align-middle',
};

const EDGE = {
  single: 'shadow-[inset_-1px_0_0_#d4d4d4,inset_0_-1px_0_#000]',
  double: 'shadow-[inset_0_-1px_0_#000,inset_0_-2px_0_#fff,inset_0_-3px_0_#000,inset_-1px_0_0_#d4d4d4]',
};

const renderCells = (row: Row) => {
  const out: React.ReactNode[] = [];
  for (let i = 0; i < COLUMNS.length; i++) {
    const cell = row.cells[COLUMNS[i]];
    const span = cell?.span ?? 1;
    out.push(
      <td
        key={COLUMNS[i]}
        colSpan={span}
        className={`p-0 whitespace-pre ${cell?.bold ? 'font-bold text-[33px]' : ''} ${cell?.align ? ALIGN[cell.align] : 'pl-[5px] align-bottom'} ${cell?.line ? EDGE[cell.line] : 'shadow-[inset_-1px_-1px_0_#d4d4d4]'}`}
      >
        {cell?.text}
      </td>
    );
    i += span - 1;
  }
  return out;
};

const Sheet: React.FC = () => (
  <main className="flex-1 min-h-0 flex bg-[#e6e6e6]">
    <div className="flex-1 min-w-0 overflow-hidden border-r border-[#999] bg-white">
      <table className="table-fixed w-[2919px] font-['Liberation_Sans',Arial,sans-serif] text-[32px] leading-[41px] text-black">
        <colgroup>
          <col className="w-[62px]" />
          {COLUMN_WIDTHS.map((w, i) => <col key={i} className={w} />)}
        </colgroup>
        <thead>
          <tr className="h-[43px] bg-[#e6e6e6] font-['Open_Sans',sans-serif] text-[27px]">
            <th aria-label="Select all" className="p-0 shadow-[inset_-1px_-1px_0_#999]">
              <svg className="ml-[23px] w-[35px] h-[35px]" viewBox="0 0 35 35" fill="#b3b3b3"><path d="M35 0v35H0z" /></svg>
            </th>
            {COLUMNS.map(c => (
              <th
                key={c}
                scope="col"
                className={`p-0 font-normal ${c === 'B' ? 'bg-[#d2d2d2] text-[#217346] shadow-[inset_0_-3px_0_#217346,inset_-1px_0_0_#999]' : 'shadow-[inset_-1px_-1px_0_#999]'}`}
              >
                {c}
              </th>
            ))}
          </tr>
        </thead>
        <tbody>
          {ROWS.map((row, i) => (
            <tr key={i} className={row.height}>
              <th scope="row" className="p-0 font-normal align-bottom bg-[#e6e6e6] shadow-[inset_-1px_-1px_0_#999] font-['Open_Sans',sans-serif] text-[27px]">
                {i < 23 ? i + 1 : ''}
              </th>
              {renderCells(row)}
            </tr>
          ))}
        </tbody>
      </table>
    </div>
    <div className="w-[42px] pl-[2px] pr-[3px] flex flex-col">
      <button aria-label="Scroll up" className="h-[38px] bg-white border-2 border-[#ababab] flex items-center justify-center">
        <svg className="w-[17px] h-[9px]" viewBox="0 0 17 9" fill="#777"><path d="M0 9h17L8.500 0z" /></svg>
      </button>
      <div className="flex-1 bg-[#dadada]"><div className="h-[344px] bg-[#f3f3f3] border-2 border-[#ababab]" /></div>
      <button aria-label="Scroll down" className="h-[37px] bg-white border-2 border-[#ababab] flex items-center justify-center">
        <svg className="w-[17px] h-[9px]" viewBox="0 0 17 9" fill="#777"><path d="M0 0h17L8.500 9z" /></svg>
      </button>
    </div>
  </main>
);

const SheetTabs: React.FC = () => (
  <div className="h-[47px] shrink-0 bg-[#e6e6e6] flex text-[28px] text-[#444]">
    <div className="flex flex-1 border-t border-[#999]">
      <div className="w-[158px] my-[4px] border-r border-[#999] flex items-center gap-[39px] pl-[35px]">
        <button aria-label="Previous sheet"><svg className="w-[8px] h-[15px]" viewBox="0 0 8 15" fill="#c3c3c3"><path d="M8 0v15L0 7.500z" /></svg></button>
        <button aria-label="Next sheet"><svg className="w-[8px] h-[15px]" viewBox="0 0 8 15" fill="#c3c3c3"><path d="M0 0v15l8-7.500z" /></svg></button>
      </div>
      <button className="w-[306px] leading-[36px] pb-[4px]">InstructionsProject4</button>
      <button className="w-[109px] h-[45px] -mt-px leading-[36px] bg-white border-x border-b-[3px] border-x-[#999] border-b-[#217346] text-[#217346] font-bold">Part 1</button>
      <button className="w-[105px] my-[4px] leading-[36px] pb-[4px] border-r border-[#999]">Part 2</button>
      <button aria-label="New sheet" className="ml-[53px]">
        <svg className="w-[34px] h-[34px]" viewBox="0 0 34 34" fill="none" stroke="#777"><circle cx="17" cy="17" r="15.500" strokeWidth="2" /><path d="M17 9v16M9 17h16" strokeWidth="3.400" /></svg>
      </button>
    </div>
    <div className="w-[1244px] border-t border-[#999] flex pt-[4px]">
      <div className="pt-[7px] pr-[22px]"><Dots /></div>
      <button aria-label="Scroll left" className="w-[38px] h-[37px] bg-white border-2 border-[#ababab] flex items-center justify-center">
        <svg className="w-[9px] h-[17px]" viewBox="0 0 9 17" fill="#777"><path d="M9 0v17L0 8.500z" /></svg>
      </button>
      <div className="flex-1 h-[37px] bg-[#dadada] pr-[89px]"><div className="h-[37px] bg-white border-2 border-[#ababab]" /></div>
      <button aria-label="Scroll right" className="w-[37px] h-[37px] bg-white border-2 border-[#ababab] flex items-center justify-center">
        <svg className="w-[9px] h-[17px]" viewBox="0 0 9 17" fill="#777"><path d="M0 0v17l9-8.500z" /></svg>
      </button>
    </div>
    <div className="w-[41px]" />
  </div>
);

const StatusBar: React.FC = () => {
  const [zoom, setZoom] = useState(50);
  return (
    <div className="h-[50px] shrink-0 border-t-2 border-[#c6c6c6] bg-[#f3f2f1] flex items-center justify-end pr-[17px] text-[#444]">
      <button aria-label="Normal view" className="w-[90px] h-[48px] bg-[#c8c6c4] flex items-center justify-center">
        <svg className="w-[30px] h-[30px]" viewBox="0 0 30 30" fill="none" stroke="#333" strokeWidth="2.2"><path d="M1 1.500h28v27H1zM1 10.500h28M1 19.500h28M10.500 1v28M19.500 1v28" /></svg>
      </button>
      <button aria-label="Page layout view" className="w-[90px] h-[48px] flex items-center justify-center">
        <svg className="w-[32px] h-[30px]" viewBox="0 0 32 30" fill="none" stroke="#444" strokeWidth="2.2"><path d="M1 1.500h30v27H1zM8 6h16v18H8zM12 11h8M12 15h8M12 19h8" /></svg>
      </button>
      <button aria-label="Page break view" className="w-[90px] h-[48px] flex items-center justify-center">
        <svg className="w-[32px] h-[30px]" viewBox="0 0 32 30" fill="none" stroke="#444" strokeWidth="2.2"><path d="M1 1.500h30v27H1zM1 17h20V2M11 2v15" /></svg>
      </button>
      <button aria-label="Zoom out" className="ml-[12px]"><svg className="w-[18px] h-[18px]" viewBox="0 0 18 18" stroke="#444" strokeWidth="2"><path d="M0 9h18" /></svg></button>
      <input
        type="range"
        aria-label="Zoom"
        value={zoom}
        onChange={e => setZoom(Number(e.target.value))}
        className="mx-[13px] w-[223px] h-[26px] appearance-none bg-[linear-gradient(#b3b0ad,#b3b0ad)] bg-[length:100%_2px] bg-center bg-no-repeat [&::-webkit-slider-thumb]:appearance-none [&::-webkit-slider-thumb]:w-[11px] [&::-webkit-slider-thumb]:h-[25px] [&::-webkit-slider-thumb]:bg-[#777]"
      />
      <button aria-label="Zoom in"><svg className="w-[18px] h-[18px]" viewBox="0 0 18 18" stroke="#444" strokeWidth="2"><path d="M0 9h18M9 0v18" /></svg></button>
      <span className="ml-[29px] text-[23px]">100%</span>
    </div>
  );
};

/* ---------- taskbar ---------- */

const TaskButton: React.FC<{ label: string; state?: string; children: React.ReactNode }> = ({ label, state = '', children }) => (
  <button aria-label={label} className={`relative w-[111px] h-full flex items-center justify-center ${state}`}>{children}</button>
);

const RUNNING = 'after:absolute after:left-[9px] after:right-[10px] after:bottom-0 after:h-[5px] after:bg-[#0078d7]';

const OfficeDoc: React.FC<{ letter: string; shades: string[]; tile: string }> = ({ letter, shades, tile }) => (
  <svg className="w-[54px] h-[50px]" viewBox="0 0 54 50">
    <path d="M15 1h36a2 2 0 0 1 2 2v10H13V3z" fill={shades[0]} />
    <path d="M13 13h40v12H13z" fill={shades[1]} />
    <path d="M13 25h40v12H13z" fill={shades[2]} />
    <path d="M13 37h40v10a2 2 0 0 1-2 2H15a2 2 0 0 1-2-2z" fill={shades[3]} />
    <rect x="1" y="11" width="28" height="28" rx="2" fill={tile} />
    <text x="15" y="32" textAnchor="middle" fontSize="20" fontWeight="700" fill="#fff" className="font-['Open_Sans',sans-serif]">{letter}</text>
  </svg>
);

const Taskbar: React.FC = () => (
  <footer className="h-[90px] shrink-0 flex bg-[linear-gradient(90deg,#d3d7da_0%,#cfd6e2_4%,#d4d7d8_8%,#d5d5dc_15%,#d2d7d6_22%,#d6d5de_28%,#d1dbdf_31%,#d1d9d6_34%,#d0d8df_37%,#dbd6d6_39%,#e4d7d8_42%,#e7d8e2_45%,#dedae6_48%,#cfd7e0_53%,#d9dae4_58%,#e3dfed_65%,#eddfeb_67%,#f1e2e5_70%,#f0e1e5_73%,#e4e2ef_75%,#e9dce9_79%,#dadfe9_84%,#d4dbe6_100%)] text-black">
    <TaskButton label="Start">
      <svg className="w-[34px] h-[34px]" viewBox="0 0 34 34"><path d="M0 5l14-2v13H0zM15.500 2.800 33 0v16H15.500zM0 17.500h14v13l-14-2zM15.500 17.500H33V34l-17.500-3z" /></svg>
    </TaskButton>
    <TaskButton label="Task view" state="pr-[8px]">
      <svg className="w-[42px] h-[40px]" viewBox="0 0 42 40" fill="none" stroke="#000" strokeWidth="2.400">
        <path d="M2 1v7h25V1M2 13h25v15H2zM2 39v-7h25v7M37.500 1v10M37.500 22v17" />
        <circle cx="37.500" cy="16" r="2" fill="#000" />
      </svg>
    </TaskButton>
    <TaskButton label="File Explorer">
      <svg className="w-[48px] h-[42px]" viewBox="0 0 48 42">
        <path d="M0 4a2 2 0 0 1 2-2h16l4 5h24a2 2 0 0 1 2 2v29a2 2 0 0 1-2 2H2a2 2 0 0 1-2-2z" fill="#ffd25a" />
        <path d="M0 10V4a2 2 0 0 1 2-2h17l4 5-4 3z" fill="#e0a000" />
        <path d="M8 42V26a4 4 0 0 1 4-4h24a4 4 0 0 1 4 4v16h-8V32H16v10z" fill="#3a96dd" />
      </svg>
    </TaskButton>
    <TaskButton label="Office">
      <svg className="w-[44px] h-[54px]" viewBox="0 0 44 54">
        <path d="M24 1 6 8C3 9 2 11 2 14v24c0 3 3 5 6 4l3-2V16l15-5z" fill="#b0182c" />
        <path d="M24 1c3-1 14 3 17 5 2 1 3 3 3 6v30c0 3-1 5-4 6l-16 5V10z" fill="#e04408" />
        <path d="M24 1l10 3v12l-10-5z" fill="#f58a14" />
        <path d="M9 42h18v11c-3 1-5 0-8-2L10 45z" fill="#d6203a" />
      </svg>
    </TaskButton>
    <TaskButton label="Chrome" state={RUNNING}>
      <svg className="w-[52px] h-[52px]" viewBox="0 0 52 52">
        <circle cx="26" cy="26" r="25" fill="#ffcd42" />
        <path d="M26 26 4.500 13.500A25 25 0 0 0 23 50.800L36 31z" fill="#1ba15e" />
        <path d="M26 14h21.900A25 25 0 0 0 4.500 13.500L16 32z" fill="#dd4e42" />
        <circle cx="26" cy="26" r="12" fill="#fff" />
        <circle cx="26" cy="26" r="9.600" fill="#4a8af4" />
      </svg>
    </TaskButton>
    <TaskButton label="Edge">
      <svg className="w-[56px] h-[56px]" viewBox="0 0 56 56">
        <defs>
          <linearGradient id="edgeTop" x1="0" x2="1" y1=".3" y2=".6"><stop offset="0" stopColor="#1b9de2" /><stop offset=".5" stopColor="#2cc3d9" /><stop offset="1" stopColor="#6be05a" /></linearGradient>
        </defs>
        <circle cx="28" cy="28" r="27" fill="#0a7ad6" />
        <path d="M2 22C6 8 16 1 28 1c16 0 27 12 27 24 0 9-8 14-16 13-6 0-8-3-5-6 3-4 1-10-4-14C22 12 8 12 2 22z" fill="url(#edgeTop)" />
        <path d="M19 28c-5 12 4 26 18 25 6-1 11-4 15-10-14 6-26-1-25-12 0-4 2-7 4-9-5-1-10 2-12 6z" fill="#124f96" />
        <path d="M27 31c0-5 3-8 5-8 4 4 3 8 1 10-2 3 0 5 5 6 6 1 13-1 17-7v4c-1 3-2 5-3 7-13 5-25-1-25-12z" fill="#d3d5da" />
        <path d="M34 32c-3 4 2 7 8 6 5 0 11-3 13-10v-4z" fill="#6be05a" />
      </svg>
    </TaskButton>
    <TaskButton label="Spotify" state={RUNNING}>
      <svg className="w-[54px] h-[54px]" viewBox="0 0 54 54">
        <path d="M0 0h54v54H0z" fill="#1ed760" />
        <circle cx="27" cy="27" r="14" fill="#fff" />
        <path d="M18 22c6-2 13-1 18 2M19 28c5-1.500 11-1 15 1.500M20 33c4-1 9-.5 12 1.500" fill="none" stroke="#1ed760" strokeWidth="2.800" strokeLinecap="round" />
      </svg>
    </TaskButton>
    <TaskButton label="Word" state={`${RUNNING} before:absolute before:z-10 before:right-[10px] before:bottom-0 before:w-[19px] before:h-[5px] before:bg-[#62abe6]`}>
      <OfficeDoc letter="W" tile="#185abd" shades={['#41a5ee', '#2b7cd3', '#185abd', '#103f91']} />
    </TaskButton>
    <TaskButton label="Excel" state="bg-[#eff2f5] border-b-[5px] border-[#0078d7] pt-[5px]">
      <OfficeDoc letter="X" tile="#107c41" shades={['#33c481', '#21a366', '#107c41', '#185c37']} />
    </TaskButton>

    <div className="flex-1 flex items-center justify-end">
      <button aria-label="Show hidden icons"><svg className="w-[28px] h-[16px]" viewBox="0 0 28 16" fill="none" stroke="#000" strokeWidth="2.400"><path d="M2 15 14 2l12 13" /></svg></button>
      <svg className="ml-[23px] w-[32px] h-[32px]" viewBox="0 0 32 32"><circle cx="16" cy="16" r="15.500" fill="#ff5a1f" /><path d="M16 6l8 9h-5v11h-6V15H8z" fill="#fff" /></svg>
      <svg className="ml-[20px] w-[34px] h-[28px]" viewBox="0 0 34 28" fill="none" stroke="#000" strokeWidth="2"><path d="M1 8h5l7-6v24l-7-6H1zM20 8l12 12M32 8 20 20" /></svg>
      <svg className="ml-[27px] w-[30px] h-[30px]" viewBox="0 0 30 30" fill="none" strokeWidth="2">
        <path d="M1 29C1 13 13 2 28 2M8 29C8 18 17 9 28 9" stroke="#8a8f96" />
        <path d="M14 29c0-8 6-14 14-14M20 29c0-5 4-8 8-8" stroke="#111" />
        <circle cx="26" cy="27" r="3" fill="#000" />
      </svg>
      <svg className="ml-[19px] w-[38px] h-[28px]" viewBox="0 0 38 28" strokeWidth="2.400">
        <path d="M9 26c-9 0-10-12-2-14C9 0 25-1 28 9c10 1 11 16 2 17z" fill="#9b9b9b" stroke="#000" />
        <path d="M9 25c-3 0-5-2-5-4l15-8 14 9c0 2-2 3-4 3z" fill="#e4e4e4" />
      </svg>
      <svg className="ml-[18px] w-[36px] h-[22px]" viewBox="0 0 36 22"><path d="M1 1h31v19H1z" fill="none" stroke="#000" strokeWidth="2" /><path d="M5 5h23v11H5zM33 7h3v8h-3z" /></svg>
      <div className="w-[174px] text-center text-[26px] leading-[42px]">
        <div>6:02 PM</div>
        <div>10/31/2020</div>
      </div>
      <button aria-label="Notifications" className="relative ml-[18px] mr-[46px]">
        <svg className="w-[36px] h-[36px]" viewBox="0 0 36 36"><path d="M0 0h36v30H22v6l-7-6H0z" /><path d="M6 8h24M6 15h24M6 22h18" stroke="#d5dbe6" strokeWidth="2" /></svg>
        <span className="absolute left-[15px] top-[15px] size-[38px] rounded-full bg-[#ccced0] border border-[#555] text-[26px] leading-[36px]">1</span>
      </button>
      <div className="w-[10px] h-full border-l border-[#a9afba]" />
    </div>
  </footer>
);

const App: React.FC = () => (
  <div className="h-screen flex flex-col overflow-hidden font-['Open_Sans','Noto_Sans',sans-serif]">
    <TitleBar />
    <Ribbon />
    <FormulaBar />
    <Sheet />
    <SheetTabs />
    <StatusBar />
    <Taskbar />
  </div>
);

export default App;
